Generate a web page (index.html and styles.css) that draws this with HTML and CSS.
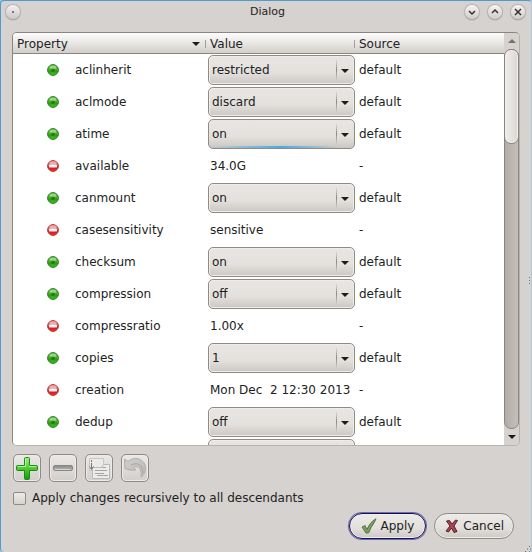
FILE: index.html
```html
<!DOCTYPE html>
<html lang="en">
<head>
<meta charset="utf-8">
<title>Dialog</title>
<link rel="stylesheet" href="styles.css">
</head>
<body>
<svg class="defs" aria-hidden="true">
  <defs>
    <linearGradient id="gGreen" x1="0" y1="0" x2="0" y2="1"><stop offset="0" stop-color="#5aa548"/><stop offset=".4" stop-color="#5ab83e"/><stop offset=".6" stop-color="#2a9c10"/><stop offset="1" stop-color="#45c622"/></linearGradient>
    <linearGradient id="gRed" x1="0" y1="0" x2="0" y2="1"><stop offset="0" stop-color="#d98080"/><stop offset=".4" stop-color="#e06060"/><stop offset=".6" stop-color="#d31414"/><stop offset="1" stop-color="#f53030"/></linearGradient>
    <linearGradient id="gPlus" x1="0" y1="0" x2="0" y2="1"><stop offset="0" stop-color="#a5ea90"/><stop offset=".5" stop-color="#4fc92f"/><stop offset="1" stop-color="#159b0c"/></linearGradient>
    <linearGradient id="gMinus" x1="0" y1="0" x2="0" y2="1"><stop offset="0" stop-color="#858585"/><stop offset="1" stop-color="#bdbdbd"/></linearGradient>
    <linearGradient id="gUndo" x1="0" y1="0" x2="1" y2="1"><stop offset="0" stop-color="#cfcecd"/><stop offset="1" stop-color="#bbbab9"/></linearGradient>
    <symbol id="dot-on" viewBox="0 0 12 12"><circle cx="6" cy="6" r="5.4" fill="url(#gGreen)" stroke="#2b7d1b"/><ellipse cx="6" cy="3.2" rx="3.4" ry="1.6" fill="#d2f0c8" opacity=".55"/><circle cx="6" cy="6.2" r="1.8" fill="#1a6a0c" opacity=".7"/></symbol>
    <symbol id="dot-off" viewBox="0 0 12 12"><circle cx="6" cy="6" r="5.4" fill="url(#gRed)" stroke="#b93636"/><ellipse cx="6" cy="3" rx="3.6" ry="1.7" fill="#f8d4d4" opacity=".6"/><rect x="2" y="4.600" width="8" height="3" rx=".6" fill="#fdf1f1"/></symbol>
  </defs>
</svg>
<div class="window">
  <header class="titlebar">
    <button class="orb menu" aria-label="Window menu"></button>
    <h1>Dialog</h1>
    <div class="controls">
      <button class="orb" aria-label="Minimize"><svg viewBox="0 0 14 14"><path d="M4 6l3 3 3-3"/></svg></button>
      <button class="orb" aria-label="Maximize"><svg viewBox="0 0 14 14"><path d="M4 8l3-3 3 3"/></svg></button>
      <button class="orb" aria-label="Close"><svg viewBox="0 0 14 14"><path d="M4 4l6 6M10 4l-6 6"/></svg></button>
    </div>
  </header>
  <main class="content">
    <div class="frame">
      <div class="view">
        <table>
          <colgroup><col class="c-prop"><col class="c-val"><col></colgroup>
          <thead><tr><th scope="col" class="sorted">Property</th><th scope="col">Value</th><th scope="col">Source</th></tr></thead>
          <tbody>
            <tr><td><span class="prop"><svg class="dot"><use href="#dot-on"/></svg>aclinherit</span></td><td><span class="combo"><select aria-label="aclinherit"><option>restricted</option></select></span></td><td>default</td></tr>
            <tr><td><span class="prop"><svg class="dot"><use href="#dot-on"/></svg>aclmode</span></td><td><span class="combo"><select aria-label="aclmode"><option>discard</option></select></span></td><td>default</td></tr>
            <tr><td><span class="prop"><svg class="dot"><use href="#dot-on"/></svg>atime</span></td><td><span class="combo active"><select aria-label="atime"><option>on</option></select></span></td><td>default</td></tr>
            <tr><td><span class="prop"><svg class="dot"><use href="#dot-off"/></svg>available</span></td><td class="text">34.0G</td><td>-</td></tr>
            <tr><td><span class="prop"><svg class="dot"><use href="#dot-on"/></svg>canmount</span></td><td><span class="combo"><select aria-label="canmount"><option>on</option></select></span></td><td>default</td></tr>
            <tr><td><span class="prop"><svg class="dot"><use href="#dot-off"/></svg>casesensitivity</span></td><td class="text">sensitive</td><td>-</td></tr>
            <tr><td><span class="prop"><svg class="dot"><use href="#dot-on"/></svg>checksum</span></td><td><span class="combo"><select aria-label="checksum"><option>on</option></select></span></td><td>default</td></tr>
            <tr><td><span class="prop"><svg class="dot"><use href="#dot-on"/></svg>compression</span></td><td><span class="combo"><select aria-label="compression"><option>off</option></select></span></td><td>default</td></tr>
            <tr><td><span class="prop"><svg class="dot"><use href="#dot-off"/></svg>compressratio</span></td><td class="text">1.00x</td><td>-</td></tr>
            <tr><td><span class="prop"><svg class="dot"><use href="#dot-on"/></svg>copies</span></td><td><span class="combo"><select aria-label="copies"><option>1</option></select></span></td><td>default</td></tr>
            <tr><td><span class="prop"><svg class="dot"><use href="#dot-off"/></svg>creation</span></td><td class="text">Mon Dec  2 12:30 2013</td><td>-</td></tr>
            <tr><td><span class="prop"><svg class="dot"><use href="#dot-on"/></svg>dedup</span></td><td><span class="combo"><select aria-label="dedup"><option>off</option></select></span></td><td>default</td></tr>
            <tr><td></td><td><span class="combo"><select aria-label="devices"></select></span></td><td></td></tr>
          </tbody>
        </table>
      </div>
      <div class="scrollbar" aria-hidden="true">
        <span class="step up"></span>
        <div class="track"><div class="thumb"></div></div>
        <span class="step down"></span>
      </div>
    </div>
    <div class="toolbar">
      <button class="tool" aria-label="Add"><svg viewBox="0 0 24 24"><path d="M10.500 1.500h3q1 0 1 1V9.500h7q1 0 1 1v3q0 1-1 1h-7v8q0 1-1 1h-3q-1 0-1-1v-8h-7q-1 0-1-1v-3q0-1 1-1h7v-7q0-1 1-1z" fill="url(#gPlus)" stroke="#189016"/><path d="M10.500 3v7.500H3M14 10.500h7" fill="none" stroke="#c9f5bb" opacity=".8"/></svg></button>
      <button class="tool" aria-label="Remove"><svg viewBox="0 0 24 24"><rect x="2.500" y="9.500" width="19" height="5" rx="1.500" fill="url(#gMinus)" stroke="#888"/><path d="M4 13.500h15" stroke="#d5d5d5"/></svg></button>
      <button class="tool" aria-label="Inherit"><svg viewBox="0 0 24 24"><path d="M2.500 2.500h14v12h-14z" fill="#ebeaea" stroke="#c8c6c4"/><path d="M5.500 11.500h9l2-3h6v14h-17z" fill="#ecebeb" stroke="#bcbab8"/><path d="M4.500 4v2M4.500 7v6M2.500 10.500l2 3 2-3" fill="none" stroke="#777"/><path d="M15 11.500h4M8 14.500h12M8 17.500h9M10 19.500h11" stroke="#a5a4a3"/></svg></button>
      <button class="tool" aria-label="Revert"><svg viewBox="0 0 24 24"><path d="M1.500 3l3.500 2.500Q10 1 16 3 22.500 5.500 22.500 12.500q0 6-4.500 8.500 1-5-1-8-2.500-4-6.500-1.500L13 14q-6 1-11-1.500z" fill="url(#gUndo)" stroke="#b0afae"/><path d="M8 9q6-3 10 1 2 3 2 7" fill="none" stroke="#a8a6a5"/></svg></button>
    </div>
    <label class="recursive"><input type="checkbox">Apply changes recursively to all descendants</label>
    <div class="actions">
      <button class="action primary"><svg viewBox="0 0 16 16"><path d="M1 9l3-1.500 2 4Q9 4 15 .8L13.500 4Q10 9 7.500 15H5z" fill="#7b9c63" stroke="#5a7648"/></svg>Apply</button>
      <button class="action"><svg viewBox="0 0 16 16"><path d="M2.500 3l3-.5 2.500 3.500 3.500-4 2 .5L10 8l3 5.500-3 1L7.500 10l-3 4L2 13l4-5z" fill="#a84350" stroke="#5b2028"/></svg>Cancel</button>
    </div>
  </main>
  <svg class="grip side" viewBox="0 0 2 8" aria-hidden="true"><path d="M0 .5h1M0 3.500h1M0 6.500h1" stroke="#777"/></svg>
  <svg class="grip corner" viewBox="0 0 6 6" aria-hidden="true"><path d="M4 .5h1M2 3h1M5 3h1M0 5.500h1M4 5.500h1" stroke="#666"/></svg>
</div>
</body>
</html>
```
FILE: styles.css
```css
* { box-sizing: border-box; }
html, body { margin: 0; height: 100%; }
body {
  background: #a4c8de;
  color: #222;
  font: 12px/16px "DejaVu Sans", sans-serif;
}
button, select, input { font: inherit; color: inherit; margin: 0; }
.defs { position: absolute; width: 0; height: 0; }

.window {
  position: relative;
  display: flex;
  flex-direction: column;
  height: 100vh;
  background: #d6d2cf;
  border: 1px solid #4f9bcd;
  border-right-color: #a9cade;
  border-bottom: 0;
  border-radius: 4px;
  overflow: hidden;
}

.titlebar {
  display: grid;
  grid-template-columns: 1fr auto 1fr;
  align-items: center;
  height: 22px;
  padding: 0 6px 0 5px;
}
.titlebar h1 { margin: 0; padding-left: 4px; font-size: 11px; font-weight: normal; }
.controls { display: flex; justify-content: flex-end; gap: 9px; }
.orb {
  width: 14px;
  height: 14px;
  padding: 0;
  border: 0;
  border-radius: 50%;
  background: linear-gradient(#f6f5f4, #cfccc9);
  box-shadow: 0 0 1px 1px #b5b1ae, 0 1px 1px 0 #7f7b78;
}
.orb svg { display: block; width: 14px; height: 14px; fill: none; stroke: #333; stroke-width: 1.5; }
.menu { background: radial-gradient(circle, #777 0 1px, transparent 1px), linear-gradient(#f3f2f1, #cbc8c5); }

.content {
  display: flex;
  flex: 1;
  flex-direction: column;
  min-height: 0;
  padding: 9px 11px 13px;
}
.frame {
  display: flex;
  flex: 1;
  min-height: 0;
  border: 1px solid #8c8580;
  border-right-color: #b8b2ad;
  border-bottom-color: #b8b3af;
  border-radius: 5px;
  overflow: hidden;
}
.view { flex: 1; min-width: 0; overflow: hidden; background: #fff; }

table { width: 100%; table-layout: fixed; border-collapse: separate; border-spacing: 0; }
.c-prop { width: 195px; }
.c-val { width: 149px; }
th {
  position: relative;
  height: 21px;
  padding: 2px 2px 0;
  background: linear-gradient(#fdfdfd, #e9e7e4 50%, #d2cec9);
  border-bottom: 1px solid #8c8580;
  font-weight: normal;
  text-align: left;
}
th:first-child { padding-left: 4px; }
th:not(:last-child)::after {
  content: "";
  position: absolute;
  top: 7px;
  right: 2px;
  width: 1px;
  height: 8px;
  background: #a39e99;
}
.sorted::before {
  content: "";
  position: absolute;
  top: 9px;
  right: 8px;
  border: 4px solid transparent;
  border-top-color: #1c1c1c;
  border-bottom: 0;
}
td { height: 32px; padding: 0 2px; white-space: pre; }
td:nth-child(2) { padding: 0 2px 0 0; }
tbody td.text { padding: 0 0 0 2px; }
.prop { display: flex; align-items: center; gap: 16px; padding-left: 32px; }
.dot { width: 12px; height: 12px; flex: none; }

.combo { position: relative; display: block; }
.combo select {
  display: block;
  appearance: none;
  width: 100%;
  height: 30px;
  padding: 0 22px 0 3px;
  border: 1px solid #918a84;
  border-radius: 5px;
  background: linear-gradient(#e8e6e3, #e3e0dd 60%, #cbc7c2);
  box-shadow: inset 0 0 0 1px #efedeb;
}
.combo::before {
  content: "";
  position: absolute;
  top: 4px;
  right: 18px;
  width: 1px;
  height: 22px;
  background: linear-gradient(transparent, #8b8580, transparent);
}
.combo::after {
  content: "";
  position: absolute;
  top: 14px;
  right: 6px;
  border: 4px solid transparent;
  border-top-color: #1c1c1c;
  border-bottom: 0;
}
.active select {
  background: linear-gradient(90deg, transparent, #45aee5 50%, transparent 90%) 0 100% / 100% 2px no-repeat,
    linear-gradient(#e8e6e3, #e3e0dd 60%, #cbc7c2);
  box-shadow: none;
}

.scrollbar {
  display: flex;
  flex-direction: column;
  width: 15px;
  background: #d6d2cf;
}
.step { display: grid; place-items: center; height: 16px; }
.step::after { content: ""; border: 4px solid transparent; }
.up::after { border-bottom-color: #77726e; border-top: 0; }
.down::after { border-top-color: #1c1c1c; border-bottom: 0; }
.track {
  flex: 1;
  border: 1px solid #8a8580;
  border-radius: 7px;
  background: linear-gradient(90deg, #b2ada9, #c4bfbb);
}
.thumb {
  height: 25%;
  margin: -1px -1px 0;
  border: 1px solid #8a8580;
  border-radius: 7px;
  background: linear-gradient(90deg, #f0eeec, #dad6d3);
  box-shadow: inset 0 0 0 1px #f1efed;
}

.toolbar, .recursive { padding-left: 1px; }
.toolbar { display: flex; gap: 8px; margin-top: 8px; }
.tool {
  width: 28px;
  height: 28px;
  padding: 1px;
  border: 1px solid #918a84;
  border-radius: 5px;
  background: linear-gradient(#ebe9e7, #d2cecb);
  box-shadow: inset 0 0 0 1px #edebe9;
}
.tool svg { display: block; width: 24px; height: 24px; }

.recursive { display: flex; align-items: center; gap: 6px; margin-top: 8px; }
.recursive input {
  appearance: none;
  width: 13px;
  height: 13px;
  border: 1px solid #918a84;
  border-radius: 2px;
  background: linear-gradient(#edebe9, #d6d2cf);
}

.actions { display: flex; justify-content: flex-end; gap: 8px; margin: 7px 6px 0 0; }
.action {
  display: flex;
  align-items: center;
  justify-content: center;
  gap: 3px;
  height: 26px;
  padding: 0 9px;
  border: 1px solid #918a84;
  border-radius: 13px;
  background: linear-gradient(#edebe9, #e2dfdc 60%, #cdc9c5);
  box-shadow: inset 0 0 0 1px #efedeb;
}
.primary {
  padding: 0 11px;
  border-color: #15105c;
  box-shadow: 0 0 0 1px #6f6ca6, inset 0 0 0 1px #efedeb;
}
.action svg { width: 16px; height: 16px; }

.grip { position: absolute; }
.side { top: 50%; right: 0; width: 2px; height: 8px; }
.corner { right: 0; bottom: 0; width: 6px; height: 6px; }
```
